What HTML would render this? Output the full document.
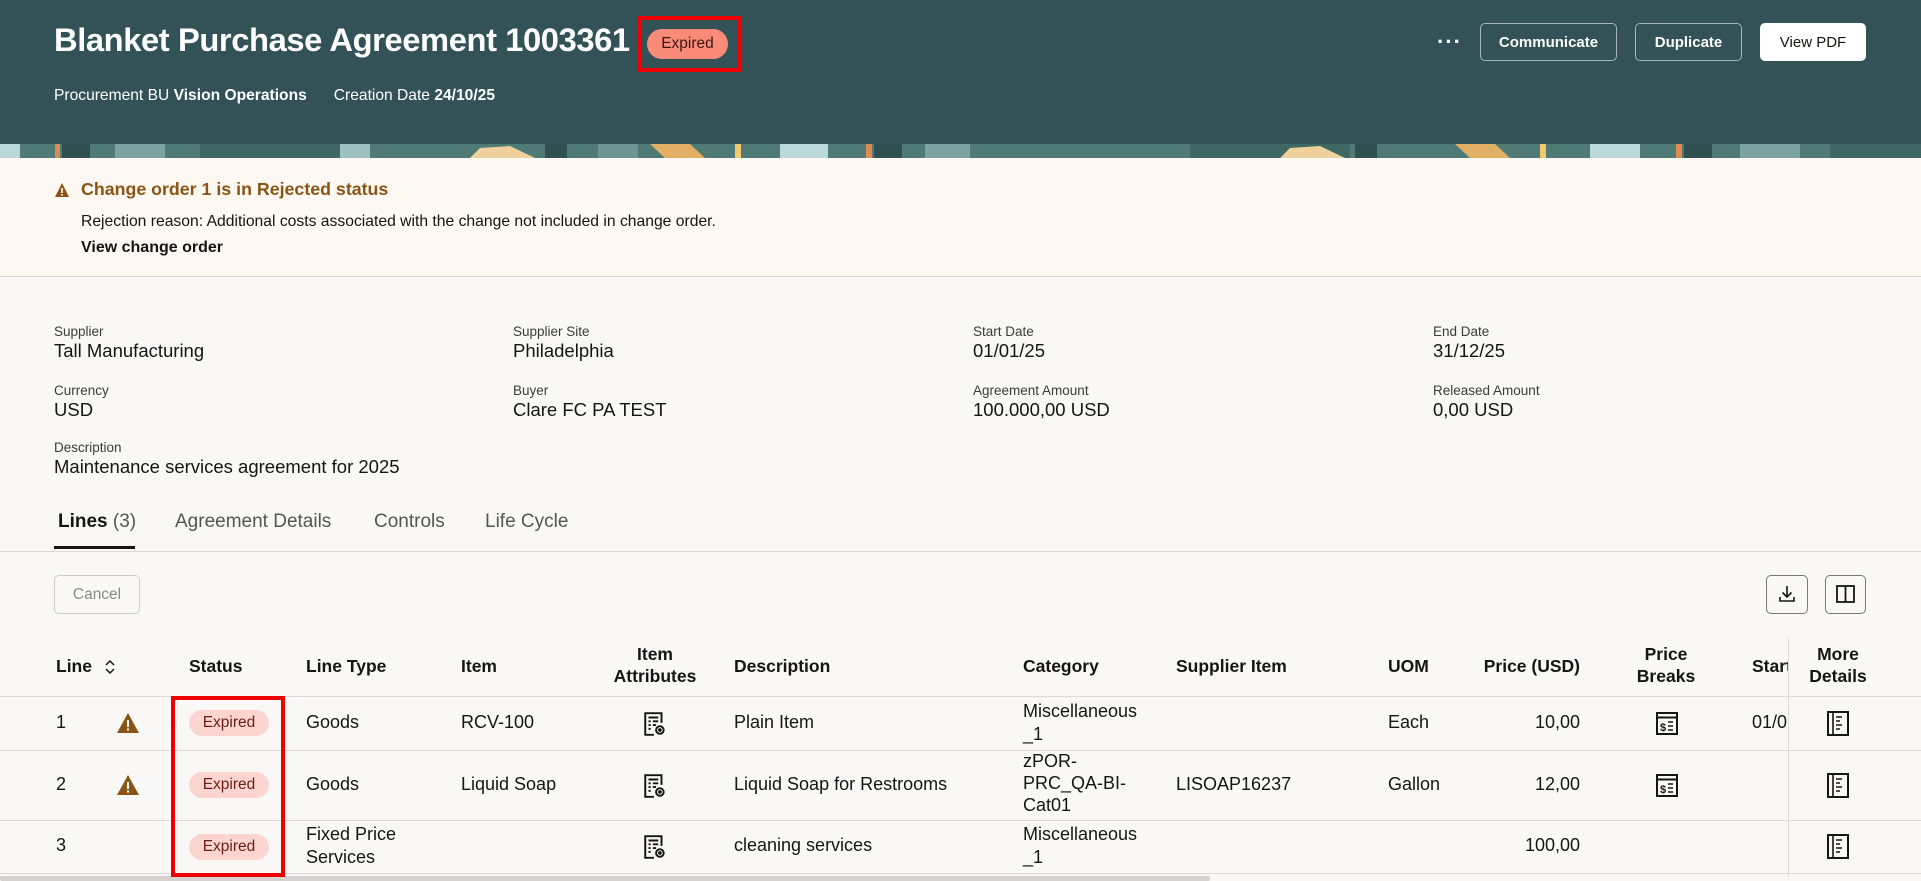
<!DOCTYPE html>
<html><head><meta charset="utf-8"><style>
*{box-sizing:border-box;margin:0;padding:0}
body{width:1921px;height:881px;overflow:hidden;background:#f9f8f6;font-family:"Liberation Sans",Arial,sans-serif;color:#161513;position:relative}
.a{position:absolute;white-space:nowrap}
.hdr{position:absolute;left:0;top:0;width:1921px;height:144px;background:#325257}
.btn{position:absolute;top:23px;height:38px;border:1px solid #a6b5b6;border-radius:5px;color:#fff;font-weight:bold;font-size:15px;display:flex;align-items:center;justify-content:center}
.lbl{font-size:13.5px;color:#3b3b3b}
.val{font-size:18.5px}
.th{font-size:17.5px;font-weight:bold;color:#161513}
.td{font-size:18px}
.badge{position:absolute;left:189px;width:80px;height:26px;border-radius:13px;background:#fcd5d0;color:#6b1d14;font-size:15.5px;display:flex;align-items:center;justify-content:center}
.hl{position:absolute;left:0;width:1921px;height:1px;background:#dedbd8}
</style></head><body>
<div class="hdr"></div>
<svg class="a" style="left:0;top:144px" width="1921" height="14" viewBox="0 0 1921 14" preserveAspectRatio="none">
<rect width="1921" height="14" fill="#4f7a76"/>
<rect x="0" y="0" width="20" height="14" fill="#b9d6d8"/>
<rect x="55" y="0" width="5" height="14" fill="#e08a4f"/>
<rect x="62" y="0" width="28" height="14" fill="#2f4f50"/>
<rect x="115" y="0" width="50" height="14" fill="#7aa3a1"/>
<rect x="200" y="0" width="160" height="14" fill="#3f6764"/>
<rect x="340" y="0" width="30" height="14" fill="#9ec1c2"/>
<polygon points="470,14 480,4 510,2 535,14" fill="#efd19e"/>
<rect x="545" y="0" width="22" height="14" fill="#2f4f50"/>
<rect x="598" y="0" width="40" height="14" fill="#6d9692"/>
<polygon points="650,0 690,0 705,14 665,14" fill="#e2b065"/>
<rect x="735" y="0" width="6" height="14" fill="#f3c970"/>
<rect x="780" y="0" width="48" height="14" fill="#bcd9db"/>
<rect x="866" y="0" width="6" height="14" fill="#e08a4f"/>
<rect x="874" y="0" width="28" height="14" fill="#2f4f50"/>
<rect x="925" y="0" width="45" height="14" fill="#7aa3a1"/>
<rect x="1190" y="0" width="160" height="14" fill="#3f6764"/>
<polygon points="1280,14 1290,4 1320,2 1345,14" fill="#efd19e"/>
<rect x="1355" y="0" width="22" height="14" fill="#2f4f50"/>
<polygon points="1455,0 1495,0 1510,14 1470,14" fill="#e2b065"/>
<rect x="1540" y="0" width="6" height="14" fill="#f3c970"/>
<rect x="1590" y="0" width="50" height="14" fill="#bcd9db"/>
<rect x="1676" y="0" width="6" height="14" fill="#e08a4f"/>
<rect x="1684" y="0" width="28" height="14" fill="#2f4f50"/>
<rect x="1740" y="0" width="60" height="14" fill="#7aa3a1"/>
<rect x="1830" y="0" width="91" height="14" fill="#3f6764"/>
</svg>
<div class="a" style="left:54px;top:21px;font-size:32.7px;font-weight:bold;color:#fff;letter-spacing:-0.4px">Blanket Purchase Agreement 1003361</div>
<div class="a" style="left:647px;top:29px;width:81px;height:30px;border-radius:15px;background:#f98b78;color:#3b1710;font-size:15.5px;display:flex;align-items:center;justify-content:center">Expired</div>
<div class="a" style="left:637px;top:16px;width:104px;height:56px;border:4px solid #ee0000"></div>
<div class="a" style="left:54px;top:87px;font-size:15.6px;color:#fff">Procurement BU <b>Vision Operations</b><span style="display:inline-block;width:27px"></span>Creation Date <b>24/10/25</b></div>
<div class="a" style="left:1437px;top:29px;color:#fff;font-size:22px;font-weight:bold;letter-spacing:1px">···</div>
<div class="btn" style="left:1480px;width:137px">Communicate</div>
<div class="btn" style="left:1635px;width:107px">Duplicate</div>
<div class="btn" style="left:1760px;width:106px;background:#fff;border-color:#fff;color:#161513;font-weight:normal">View PDF</div>

<div class="a" style="left:0;top:158px;width:1921px;height:119px;background:#fdf8f2;border-bottom:1px solid #dcd6cf"></div>
<svg class="a" style="left:54px;top:182px" width="16" height="16" viewBox="0 0 16 16"><polygon points="8,1 15,15 1,15" fill="#8a5415"/><rect x="7.2" y="6" width="1.6" height="5" fill="#fff"/><rect x="7.2" y="12" width="1.6" height="1.6" fill="#fff"/></svg>
<div class="a" style="left:81px;top:179px;font-size:17.8px;font-weight:bold;color:#8a5415">Change order 1 is in Rejected status</div>
<div class="a" style="left:81px;top:213px;font-size:15.7px">Rejection reason: Additional costs associated with the change not included in change order.</div>
<div class="a" style="left:81px;top:239px;font-size:16px;font-weight:bold">View change order</div>

<div class="a lbl" style="left:54px;top:324px">Supplier</div><div class="a val" style="left:54px;top:340px">Tall Manufacturing</div>
<div class="a lbl" style="left:513px;top:324px">Supplier Site</div><div class="a val" style="left:513px;top:340px">Philadelphia</div>
<div class="a lbl" style="left:973px;top:324px">Start Date</div><div class="a val" style="left:973px;top:340px">01/01/25</div>
<div class="a lbl" style="left:1433px;top:324px">End Date</div><div class="a val" style="left:1433px;top:340px">31/12/25</div>
<div class="a lbl" style="left:54px;top:383px">Currency</div><div class="a val" style="left:54px;top:399px">USD</div>
<div class="a lbl" style="left:513px;top:383px">Buyer</div><div class="a val" style="left:513px;top:399px">Clare FC PA TEST</div>
<div class="a lbl" style="left:973px;top:383px">Agreement Amount</div><div class="a val" style="left:973px;top:399px">100.000,00 USD</div>
<div class="a lbl" style="left:1433px;top:383px">Released Amount</div><div class="a val" style="left:1433px;top:399px">0,00 USD</div>
<div class="a lbl" style="left:54px;top:440px">Description</div><div class="a val" style="left:54px;top:456px">Maintenance services agreement for 2025</div>

<div class="a" style="left:58px;top:511px;font-size:19px;font-weight:bold">Lines <span style="font-weight:normal;color:#555">(3)</span></div>
<div class="a" style="left:175px;top:511px;font-size:19px;color:#555">Agreement Details</div>
<div class="a" style="left:374px;top:511px;font-size:19px;color:#555">Controls</div>
<div class="a" style="left:485px;top:511px;font-size:19px;color:#555">Life Cycle</div>
<div class="a" style="left:54px;top:546px;width:81px;height:3px;background:#161513"></div>
<div class="hl" style="top:551px"></div>

<div class="a" style="left:54px;top:575px;width:86px;height:39px;border:1px solid #cfcbc6;border-radius:5px;color:#8a8886;font-size:15.5px;display:flex;align-items:center;justify-content:center">Cancel</div>
<div class="a" style="left:1766px;top:575px;width:42px;height:39px;border:1px solid #7a7673;border-radius:5px"></div>
<svg class="a" style="left:1777px;top:584px" width="20" height="20" viewBox="0 0 20 20" fill="none" stroke="#161513" stroke-width="1.6"><path d="M10 2v11M5.5 8.5L10 13l4.5-4.5M3 13v4h14v-4"/></svg>
<div class="a" style="left:1825px;top:575px;width:41px;height:39px;border:1px solid #7a7673;border-radius:5px"></div>
<svg class="a" style="left:1835px;top:584px" width="21" height="20" viewBox="0 0 21 20" fill="none" stroke="#161513" stroke-width="1.8"><rect x="2" y="2" width="17" height="16"/><path d="M10.5 2v16"/></svg>

<div class="a th" style="left:56px;top:656px">Line</div>
<svg class="a" style="left:104px;top:659px" width="12" height="16" viewBox="0 0 12 16" fill="none" stroke="#161513" stroke-width="1.5"><path d="M2 6l4-4 4 4M2 10l4 4 4-4"/></svg>
<div class="a th" style="left:189px;top:656px">Status</div>
<div class="a th" style="left:306px;top:656px">Line Type</div>
<div class="a th" style="left:461px;top:656px">Item</div>
<div class="a th" style="left:605px;top:643px;width:100px;text-align:center;line-height:22px">Item<br>Attributes</div>
<div class="a th" style="left:734px;top:656px">Description</div>
<div class="a th" style="left:1023px;top:656px">Category</div>
<div class="a th" style="left:1176px;top:656px">Supplier Item</div>
<div class="a th" style="left:1388px;top:656px">UOM</div>
<div class="a th" style="left:1460px;top:656px;width:120px;text-align:right">Price (USD)</div>
<div class="a th" style="left:1626px;top:643px;width:80px;text-align:center;line-height:22px">Price<br>Breaks</div>
<div class="a th" style="left:1752px;top:656px">Start</div>
<div class="a" style="left:1788px;top:637px;width:133px;height:240px;background:#f9f8f6;border-left:1px solid #dedbd8"></div>
<div class="a th" style="left:1798px;top:643px;width:80px;text-align:center;line-height:22px">More<br>Details</div>

<div class="hl" style="top:696px"></div>
<div class="hl" style="top:750px"></div>
<div class="hl" style="top:820px"></div>
<div class="hl" style="top:873px"></div>
<div class="a" style="left:0;top:876px;width:1210px;height:5px;background:#d5d2cf;border-radius:2px"></div>

<div class="a td" style="left:56px;top:712px">1</div>
<div class="a td" style="left:56px;top:774px">2</div>
<div class="a td" style="left:56px;top:835px">3</div>
<svg class="a" style="left:116px;top:712px" width="24" height="22" viewBox="0 0 24 22"><polygon points="12,1 23,21 1,21" fill="#8a5415"/><rect x="11" y="8" width="2" height="7" fill="#fff"/><rect x="11" y="16.5" width="2" height="2" fill="#fff"/></svg>
<svg class="a" style="left:116px;top:774px" width="24" height="22" viewBox="0 0 24 22"><polygon points="12,1 23,21 1,21" fill="#8a5415"/><rect x="11" y="8" width="2" height="7" fill="#fff"/><rect x="11" y="16.5" width="2" height="2" fill="#fff"/></svg>
<div class="badge" style="top:710px">Expired</div>
<div class="badge" style="top:772px">Expired</div>
<div class="badge" style="top:834px">Expired</div>
<div class="a" style="left:171px;top:696px;width:114px;height:181px;border:4px solid #ee0000"></div>
<div class="a td" style="left:306px;top:712px">Goods</div>
<div class="a td" style="left:306px;top:774px">Goods</div>
<div class="a td" style="left:306px;top:823px;line-height:23px">Fixed Price<br>Services</div>
<div class="a td" style="left:461px;top:712px">RCV-100</div>
<div class="a td" style="left:461px;top:774px">Liquid Soap</div>
<svg class="a" style="left:643px;top:711px" width="24" height="26" viewBox="0 0 22 24" fill="none" stroke="#161513" stroke-width="1.8"><path d="M10 22H2V2h15v9"/><path d="M5 6h9M5 9.5h2M9 9.5h5M5 13h2M9 13h3M5 16.5h2"/><circle cx="15.5" cy="17.5" r="3.5"/><circle cx="15.5" cy="17.5" r="0.8" fill="#161513"/></svg>
<svg class="a" style="left:643px;top:773px" width="24" height="26" viewBox="0 0 22 24" fill="none" stroke="#161513" stroke-width="1.8"><path d="M10 22H2V2h15v9"/><path d="M5 6h9M5 9.5h2M9 9.5h5M5 13h2M9 13h3M5 16.5h2"/><circle cx="15.5" cy="17.5" r="3.5"/><circle cx="15.5" cy="17.5" r="0.8" fill="#161513"/></svg>
<svg class="a" style="left:643px;top:834px" width="24" height="26" viewBox="0 0 22 24" fill="none" stroke="#161513" stroke-width="1.8"><path d="M10 22H2V2h15v9"/><path d="M5 6h9M5 9.5h2M9 9.5h5M5 13h2M9 13h3M5 16.5h2"/><circle cx="15.5" cy="17.5" r="3.5"/><circle cx="15.5" cy="17.5" r="0.8" fill="#161513"/></svg>
<div class="a td" style="left:734px;top:712px">Plain Item</div>
<div class="a td" style="left:734px;top:774px">Liquid Soap for Restrooms</div>
<div class="a td" style="left:734px;top:835px">cleaning services</div>
<div class="a td" style="left:1023px;top:700px;line-height:23px">Miscellaneous<br>_1</div>
<div class="a td" style="left:1023px;top:750px;line-height:22px">zPOR-<br>PRC_QA-BI-<br>Cat01</div>
<div class="a td" style="left:1023px;top:823px;line-height:23px">Miscellaneous<br>_1</div>
<div class="a td" style="left:1176px;top:774px">LISOAP16237</div>
<div class="a td" style="left:1388px;top:712px">Each</div>
<div class="a td" style="left:1388px;top:774px">Gallon</div>
<div class="a td" style="left:1480px;top:712px;width:100px;text-align:right">10,00</div>
<div class="a td" style="left:1480px;top:774px;width:100px;text-align:right">12,00</div>
<div class="a td" style="left:1480px;top:835px;width:100px;text-align:right">100,00</div>
<svg class="a" style="left:1655px;top:711px" width="24" height="25" viewBox="0 0 24 25" fill="none" stroke="#161513" stroke-width="2"><rect x="2" y="2" width="20" height="21"/><path d="M2 6.5h20"/><text x="5" y="20" font-size="11" font-weight="bold" fill="#161513" stroke="none" font-family="Liberation Sans">$</text><path d="M13 11h5M13 15h5M13 19h5" stroke-width="1.6"/></svg>
<svg class="a" style="left:1655px;top:773px" width="24" height="25" viewBox="0 0 24 25" fill="none" stroke="#161513" stroke-width="2"><rect x="2" y="2" width="20" height="21"/><path d="M2 6.5h20"/><text x="5" y="20" font-size="11" font-weight="bold" fill="#161513" stroke="none" font-family="Liberation Sans">$</text><path d="M13 11h5M13 15h5M13 19h5" stroke-width="1.6"/></svg>
<div class="a td" style="left:1752px;top:712px;width:36px;overflow:hidden">01/01</div>
<svg class="a" style="left:1826px;top:710px" width="24" height="27" viewBox="0 0 24 27" fill="none" stroke="#161513" stroke-width="2"><rect x="2" y="2" width="20" height="23"/><path d="M7 2v23M10 7h6M10 11h4M10 15h6M10 19h4" stroke-width="1.6"/></svg>
<svg class="a" style="left:1826px;top:772px" width="24" height="27" viewBox="0 0 24 27" fill="none" stroke="#161513" stroke-width="2"><rect x="2" y="2" width="20" height="23"/><path d="M7 2v23M10 7h6M10 11h4M10 15h6M10 19h4" stroke-width="1.6"/></svg>
<svg class="a" style="left:1826px;top:833px" width="24" height="27" viewBox="0 0 24 27" fill="none" stroke="#161513" stroke-width="2"><rect x="2" y="2" width="20" height="23"/><path d="M7 2v23M10 7h6M10 11h4M10 15h6M10 19h4" stroke-width="1.6"/></svg>
</body></html>
